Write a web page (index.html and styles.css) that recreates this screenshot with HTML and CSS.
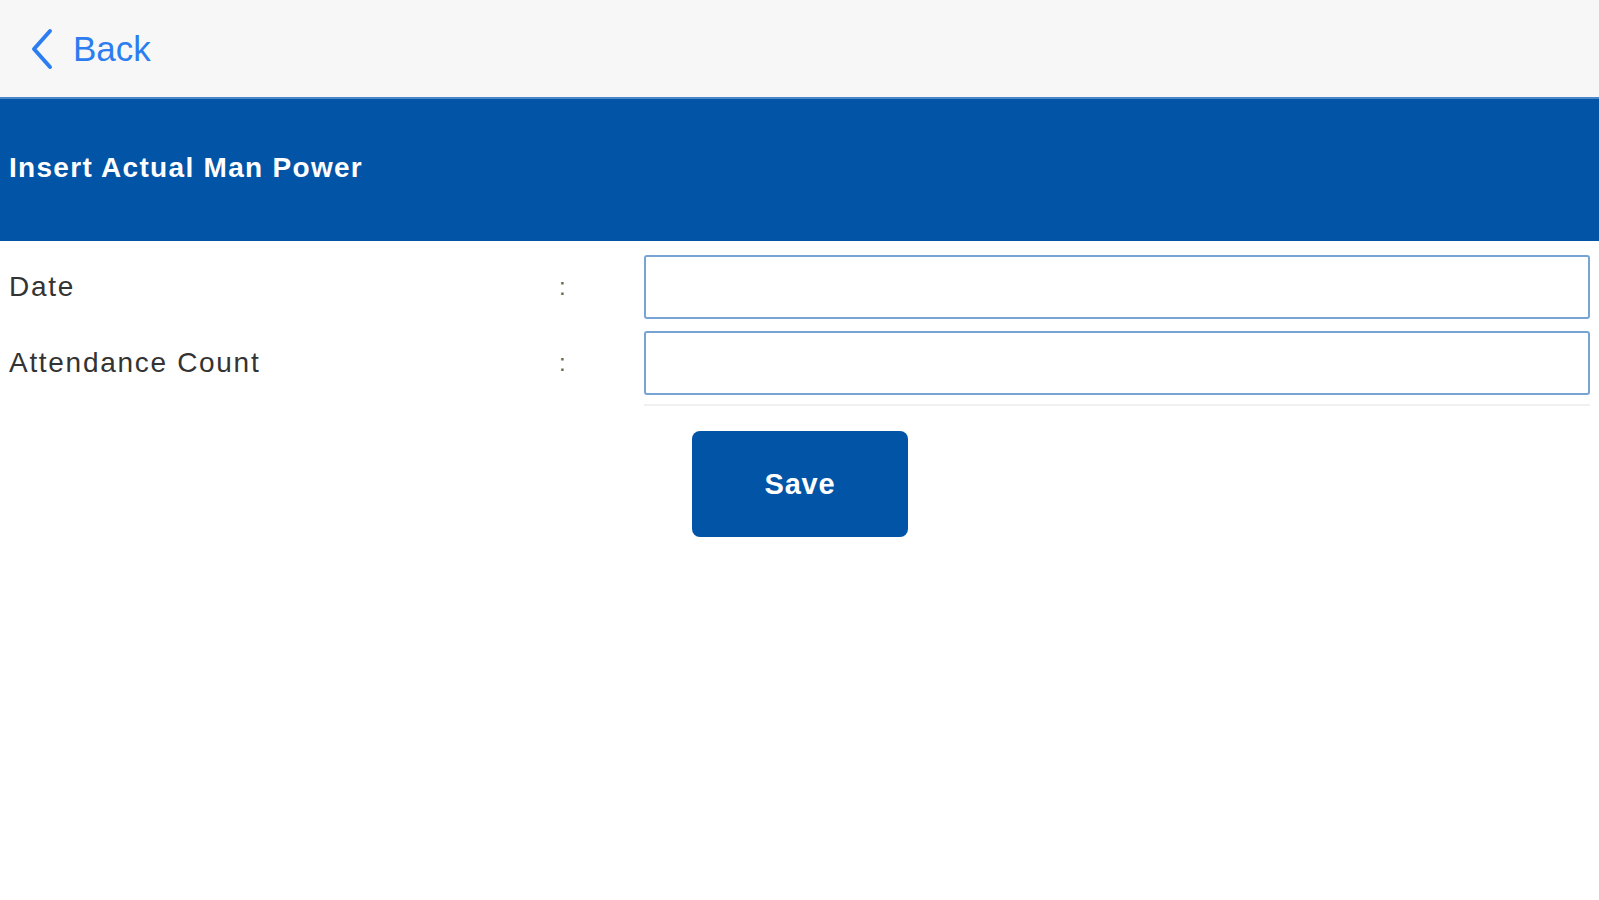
FILE: index.html
```html
<!DOCTYPE html>
<html lang="en">
<head>
  <meta charset="UTF-8">
  <meta name="viewport" content="width=device-width, initial-scale=1.0">
  <title>Insert Actual Man Power</title>
  <link rel="stylesheet" href="styles.css">
</head>
<body>
  <div class="topbar">
    <a class="back" href="#">
      <svg class="chevron" width="24" height="42" viewBox="0 0 24 42">
        <path d="M20 3 L4 21 L20 39" fill="none" stroke="#2c7df0" stroke-width="4" stroke-linecap="round" stroke-linejoin="round"/>
      </svg>
      <span>Back</span>
    </a>
  </div>

  <div class="titlebar">Insert Actual Man Power</div>

  <form class="entry-form" onsubmit="return false;">
    <div class="fields">
      <label class="label" for="date">Date</label>
      <span class="colon">:</span>
      <input type="text" id="date" name="date" class="input-field">

      <label class="label" for="count">Attendance Count</label>
      <span class="colon">:</span>
      <input type="text" id="count" name="count" class="input-field">
    </div>
    <div class="divider"></div>
    <div class="actions">
      <button type="submit" class="save">Save</button>
    </div>
  </form>
</body>
</html>
```

FILE: styles.css
```css
body {
  margin: 0;
  padding: 0;
  font-family: 'Liberation Sans', Arial, sans-serif;
  background-color: #ffffff;
  color: #333333;
}
.topbar {
  height: 97px;
  background-color: #f7f7f7;
  display: flex;
  align-items: center;
  padding-left: 30px;
  box-sizing: border-box;
}
.back {
  display: flex;
  align-items: center;
  gap: 19px;
  color: #2c7df0;
  text-decoration: none;
  font-size: 35px;
}
.chevron {
  display: block;
}
.titlebar {
  height: 144px;
  box-sizing: border-box;
  background-color: #0154a6;
  color: #ffffff;
  display: flex;
  align-items: center;
  padding: 0 0 4px 9px;
  font-size: 28px;
  font-weight: 700;
  letter-spacing: 1.3px;
  border-top: 2px solid #4a86c8;
}
.entry-form {
  padding-top: 14px;
}
.fields {
  display: grid;
  grid-template-columns: 555px 89px 1fr;
  row-gap: 12px;
  align-items: center;
  padding-right: 9px;
}
.label {
  padding-left: 9px;
  font-size: 28px;
  letter-spacing: 1.7px;
  color: #333333;
}
.colon {
  padding-left: 4px;
  font-size: 24px;
  color: #666666;
}
.input-field {
  height: 64px;
  box-sizing: border-box;
  border: 2px solid #77a3d5;
  border-radius: 3px;
  background: #ffffff;
  font-size: 24px;
  padding: 0 10px;
  outline: none;
}
.divider {
  margin: 9px 9px 0 644px;
  height: 2px;
  background-color: #f0f0f0;
}
.actions {
  padding: 25px 0 0 692px;
}
.save {
  width: 216px;
  height: 106px;
  border: none;
  border-radius: 8px;
  background-color: #0154a6;
  color: #ffffff;
  font-family: 'Liberation Sans', Arial, sans-serif;
  font-size: 29px;
  font-weight: 700;
  letter-spacing: 0.8px;
  cursor: pointer;
}
```
